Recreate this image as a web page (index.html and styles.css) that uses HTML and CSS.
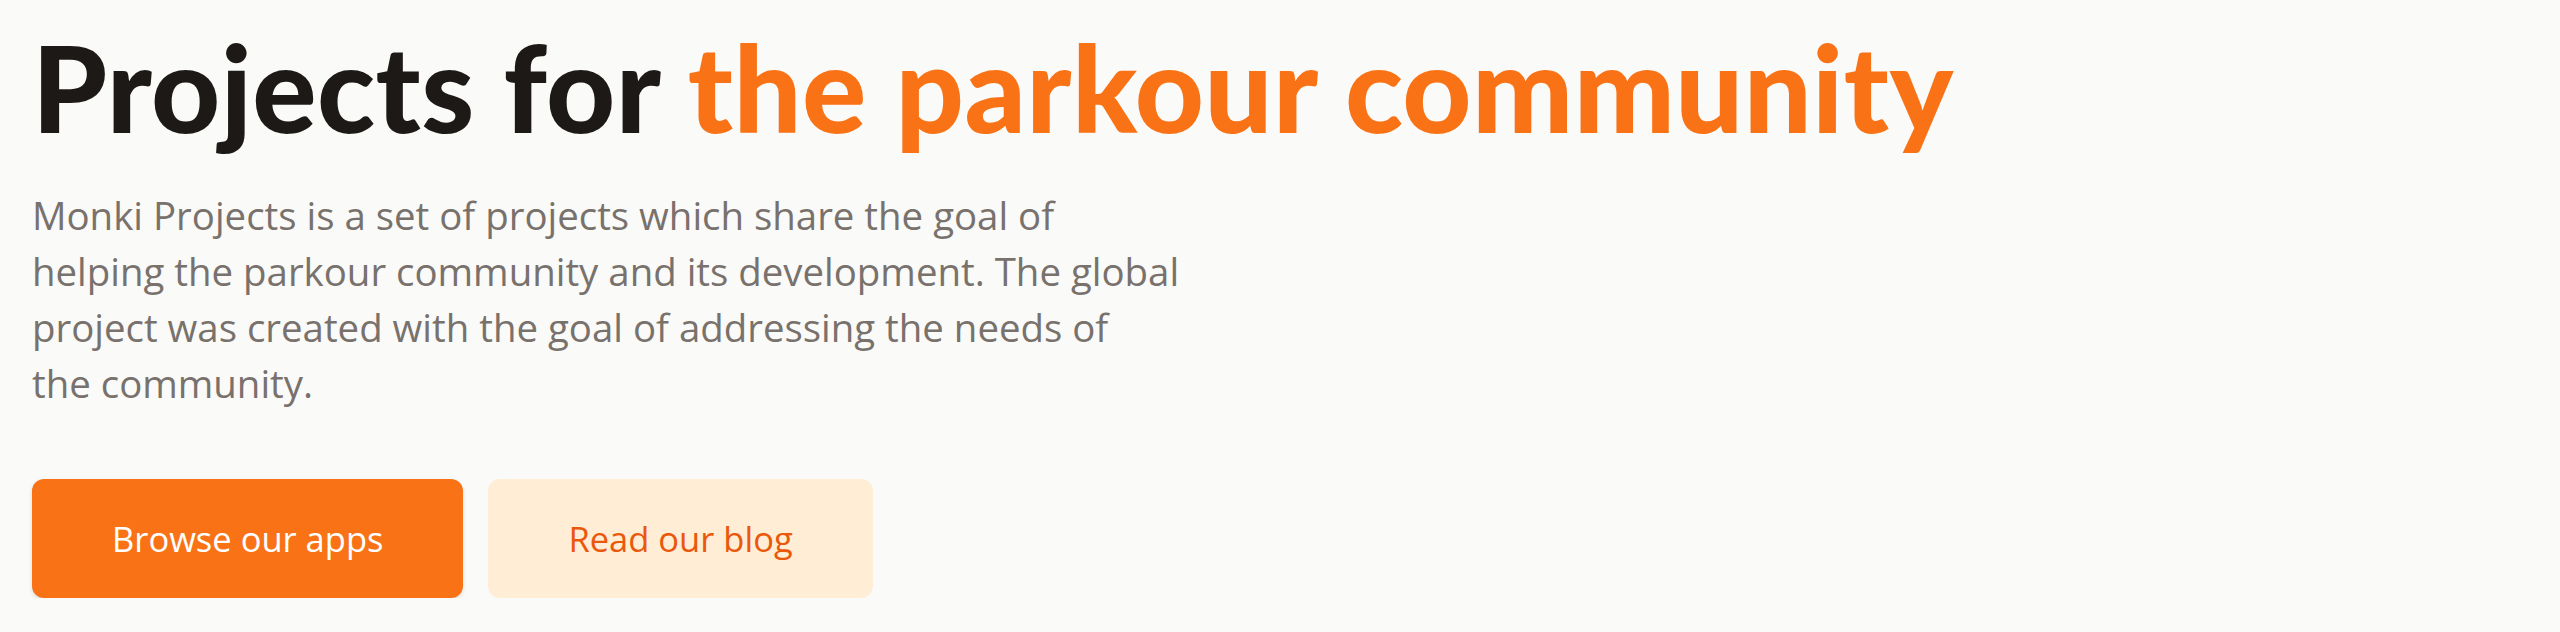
FILE: index.html
```html
<!DOCTYPE html>
<html lang="en">
<head>
<meta charset="utf-8">
<title>Monki Projects</title>
<link rel="stylesheet" href="styles.css">
</head>
<body>
<main class="hero">
  <h1 class="hero-title">Projects for <span class="accent">the parkour community</span></h1>
  <p class="hero-text">Monki Projects is a set of projects which share the goal of<br>helping the parkour community and its development. The global<br>project was created with the goal of addressing the needs of<br>the community.</p>
  <div class="hero-actions">
    <a class="btn btn-primary" href="#">Browse our apps</a>
    <a class="btn btn-secondary" href="#">Read our blog</a>
  </div>
</main>
</body>
</html>
```

FILE: styles.css
```css
html, body {
  margin: 0;
  padding: 0;
  background: #fafaf9;
}

body {
  font-family: "Open Sans", "Lato", sans-serif;
}

.hero {
  padding: 27px 32px 0 32px;
  display: flex;
  flex-direction: column;
  align-items: flex-start;
}

.hero-title {
  margin: 0;
  font-family: "Lato", "Open Sans", sans-serif;
  font-size: 120px;
  line-height: 1;
  font-weight: 900;
  color: #1c1917;
  letter-spacing: 0.4px;
}

.accent {
  color: #f97316;
}

.hero-text {
  margin: 40px 0 0 0;
  font-size: 38.4px;
  line-height: 56px;
  color: #78716c;
}

.hero-actions {
  display: flex;
  gap: 25px;
  margin-top: 68px;
}

.btn {
  display: flex;
  align-items: center;
  justify-content: center;
  height: 119px;
  padding: 0 80px;
  box-sizing: border-box;
  border-radius: 12px;
  font-size: 34.5px;
  text-decoration: none;
}

.btn-primary {
  background: #f97316;
  color: #ffffff;
  box-shadow: 0 2px 4px rgba(0, 0, 0, 0.12);
}

.btn-secondary {
  background: #ffedd5;
  color: #ea580c;
}
```
